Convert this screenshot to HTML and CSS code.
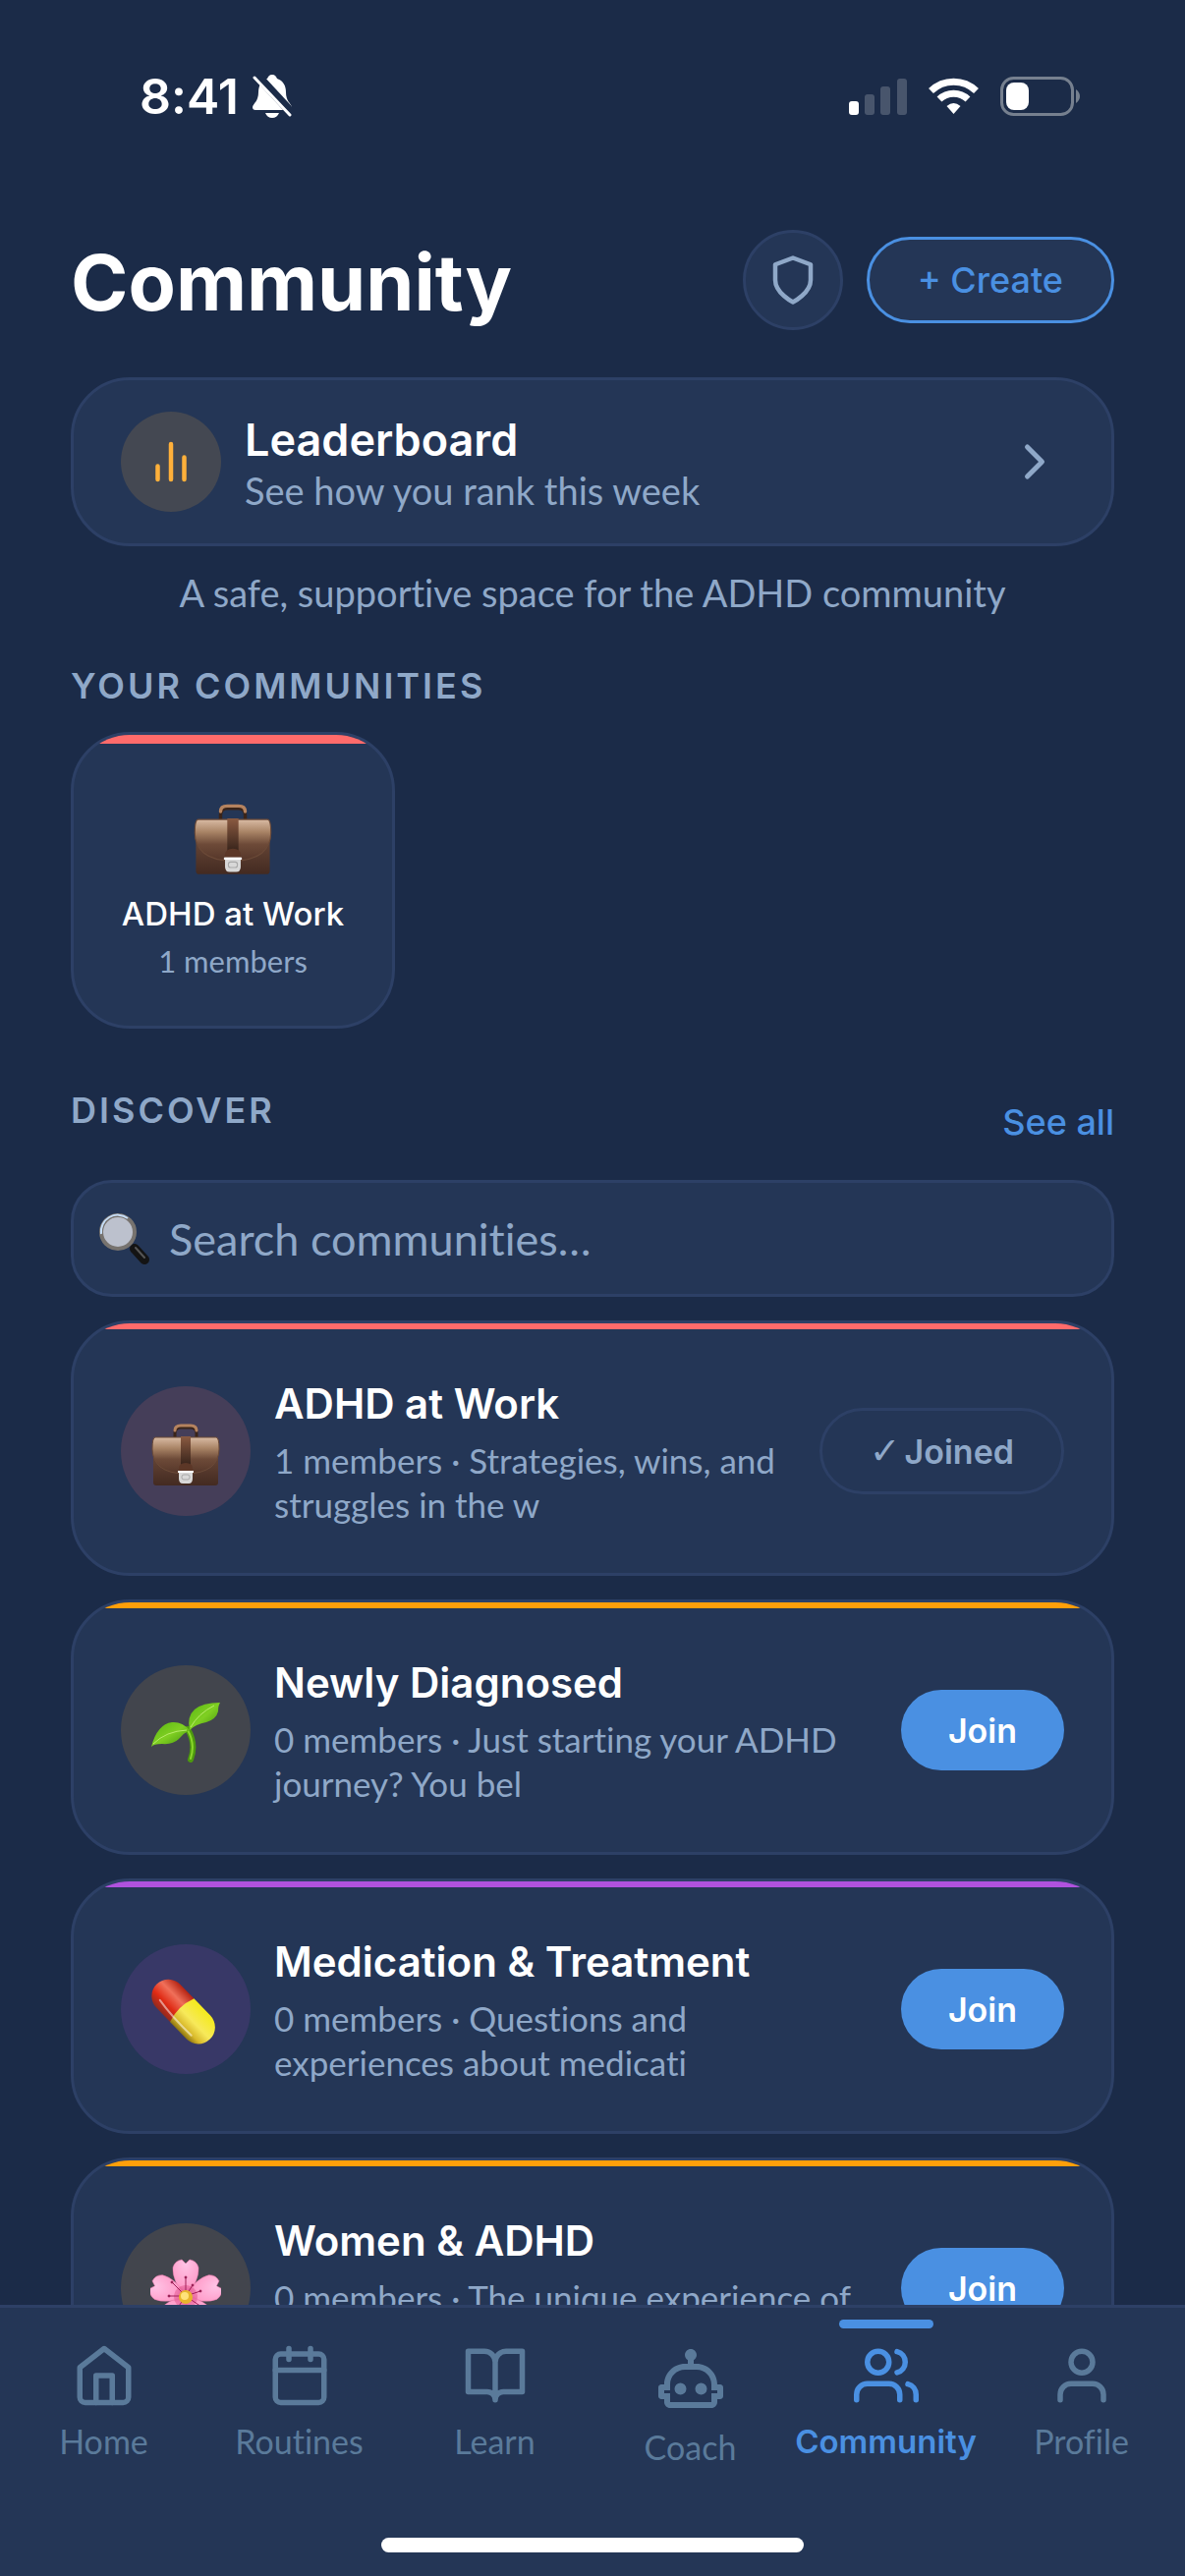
FILE: index.html
```html
<!DOCTYPE html>
<html lang="en">
<head>
  <meta charset="UTF-8">
  <meta name="viewport" content="width=device-width, initial-scale=1.0">
  <title>Community</title>
  <link rel="stylesheet" href="styles.css">
</head>
<body>

<!-- shared drawings -->
<svg class="sprite" aria-hidden="true">
  <defs>
    <linearGradient id="flap" x1="0" y1="0" x2="0" y2="1">
      <stop offset="0" stop-color="#d9bba4"/>
      <stop offset="0.3" stop-color="#a98466"/>
      <stop offset="0.6" stop-color="#6d4a38"/>
      <stop offset="1" stop-color="#553629"/>
    </linearGradient>
    <linearGradient id="bag" x1="0" y1="0" x2="0" y2="1">
      <stop offset="0" stop-color="#7a5542"/>
      <stop offset="1" stop-color="#432a21"/>
    </linearGradient>
    <linearGradient id="strap" x1="0" y1="0" x2="0" y2="1">
      <stop offset="0" stop-color="#8a5a41"/>
      <stop offset="1" stop-color="#38241b"/>
    </linearGradient>
    <linearGradient id="leaf" x1="0" y1="0" x2="1" y2="1">
      <stop offset="0" stop-color="#58b512"/>
      <stop offset="0.5" stop-color="#7fcf22"/>
      <stop offset="1" stop-color="#3f8f0b"/>
    </linearGradient>
    <linearGradient id="pill-red" x1="0" y1="0" x2="0" y2="1">
      <stop offset="0" stop-color="#b52413"/>
      <stop offset="0.35" stop-color="#f0705a"/>
      <stop offset="0.7" stop-color="#e02a14"/>
      <stop offset="1" stop-color="#8e2a1e"/>
    </linearGradient>
    <linearGradient id="pill-yellow" x1="0" y1="0" x2="0" y2="1">
      <stop offset="0" stop-color="#f4ea1c"/>
      <stop offset="0.5" stop-color="#f7e95a"/>
      <stop offset="0.8" stop-color="#d9b92b"/>
      <stop offset="1" stop-color="#8d7410"/>
    </linearGradient>
    <radialGradient id="petal" cx="0.5" cy="0.1" r="1">
      <stop offset="0" stop-color="#ffc4e6"/>
      <stop offset="0.6" stop-color="#ff9fcb"/>
      <stop offset="1" stop-color="#d9437f"/>
    </radialGradient>
  </defs>

  <symbol id="briefcase" viewBox="0 0 72 72">
    <path d="M25 23v-5q0-6 6-6h10q6 0 6 6v5" fill="none" stroke="#3a2419" stroke-width="3"/>
    <path d="M25 15q0-5 6-5h10q6 0 6 5" fill="none" stroke="#b5835f" stroke-width="3" stroke-linecap="round"/>
    <rect x="3" y="24" width="66" height="47" rx="3" fill="url(#bag)"/>
    <path d="M5 22h62q3 0 3 12 0 11-8 18-9 7-26 7t-26-7Q2 45 2 34q0-12 3-12z" fill="url(#flap)" stroke="#6b4a38" stroke-width="1"/>
    <path d="M31 21h10v29H31z" fill="url(#strap)"/>
    <path d="M29 59v-5q0-6 7-6t7 6v5z" fill="#5c3727"/>
    <path d="M29 56h14v8q0 5-4 5h-6q-4 0-4-5z" fill="#d8d8d8"/>
    <path d="M28 56h16v2H28z" fill="#fff"/>
    <rect x="32" y="60" width="8" height="5" rx="2" fill="none" stroke="#a9a9a9"/>
  </symbol>

  <symbol id="sprout" viewBox="0 0 72 72">
    <path d="M38 35q9 15 3 31" fill="none" stroke="#4d9a0e" stroke-width="6" stroke-linecap="round"/>
    <path d="M38 36q8 14 3 29" fill="none" stroke="#8ad62a" stroke-width="2" stroke-linecap="round"/>
    <path d="M40 36Q32 27 22 28 7 30 1 53q2-3 11-3 11 1 17-5 5-6 11-9z" fill="url(#leaf)"/>
    <path d="M40 36q-3-14 5-21 8-7 26-7-2 3-2 9-2 8-12 11-11 2-17 8z" fill="url(#leaf)"/>
    <path d="M3 50q13-13 34-14M41 33q8-14 24-22" fill="none" stroke="#b9ec6a" stroke-width="1"/>
  </symbol>

  <symbol id="pill" viewBox="0 0 72 72">
    <g transform="rotate(46 35 40)">
      <path d="M35 23H15a17 17 0 000 34h20z" fill="url(#pill-red)" transform="translate(-4 0)"/>
      <path d="M31 23h24a17 17 0 010 34H31q-6-17 0-34z" fill="url(#pill-yellow)"/>
      <path d="M8 49q20 3 48 2" fill="none" stroke="#fff" stroke-opacity="0.5" stroke-width="2" stroke-linecap="round"/>
    </g>
  </symbol>

  <symbol id="blossom" viewBox="0 0 72 72">
    <g fill="url(#petal)" stroke="#f07db0" stroke-width="0.5">
      <path id="p" d="M36 46Q22 28 23 15q2-7 9-8l4 4 4-4q7 1 9 8 1 13-13 31z"/>
      <use href="#p" transform="rotate(72 36 44)"/>
      <use href="#p" transform="rotate(144 36 44)"/>
      <use href="#p" transform="rotate(216 36 44)"/>
      <use href="#p" transform="rotate(288 36 44)"/>
    </g>
    <circle cx="36" cy="45" r="12" fill="#d9437f" fill-opacity="0.4"/>
    <g stroke="#a02058" stroke-width="1" fill="#7d1440">
      <path d="M36 44V25M36 44L22 30M36 44L51 39M36 44L19 44M36 44L52 55M36 44L25 60M36 44L43 33"/>
      <circle cx="36" cy="25" r="1"/><circle cx="22" cy="30" r="1"/><circle cx="51" cy="39" r="1"/>
      <circle cx="19" cy="44" r="1"/><circle cx="52" cy="55" r="1"/><circle cx="25" cy="60" r="1"/><circle cx="43" cy="33" r="1"/>
    </g>
    <circle cx="36" cy="45" r="7" fill="#e8b52c"/>
    <circle cx="35" cy="44" r="4" fill="#ffe27a"/>
  </symbol>
</svg>

<div class="app">

  <div class="status-bar">
    <div class="status-time">
      <span>8:41</span>
      <svg width="40" height="44" viewBox="0 0 40 44">
        <path d="M20 0c3 0 4 2 5 4 6 2 9 7 9 14 0 9 5 11 6 15 0 2-1 3-3 3H3c-2 0-3-1-3-3 1-4 6-6 6-15 0-7 3-12 9-14 1-2 2-4 5-4zM13 39h14c-1 3-4 5-7 5s-6-2-7-5z" fill="#fff"/>
        <path d="M3-1L42 41" stroke="#1b2b48" stroke-width="9"/>
        <path d="M2 3L38 41" stroke="#fff" stroke-width="3" stroke-linecap="round"/>
      </svg>
    </div>
    <div class="status-icons">
      <svg width="59" height="38" viewBox="0 0 59 38" fill="#fff">
        <rect y="24" width="10" height="14" rx="3"/>
        <rect x="16" y="17" width="10" height="21" rx="3" opacity="0.2"/>
        <rect x="32" y="9" width="10" height="29" rx="3" opacity="0.2"/>
        <rect x="49" y="1" width="10" height="37" rx="3" opacity="0.2"/>
      </svg>
      <svg width="51" height="38" viewBox="0 0 51 38" fill="none" stroke="#fff" stroke-width="7">
        <path d="M2.500 13.500A33 33 0 0148.500 13.500"/>
        <path d="M11 22A21 21 0 0140 22"/>
        <path d="M25.500 37l-7-8q7-6 14 0z" fill="#fff" stroke="none"/>
      </svg>
      <svg width="81" height="40" viewBox="0 0 81 40">
        <rect x="1.500" y="1.500" width="72" height="37" rx="12" fill="none" stroke="#76808f" stroke-width="3"/>
        <path d="M77 13q4 3 4 7t-4 7z" fill="#76808f"/>
        <rect x="6" y="6" width="23" height="28" rx="8" fill="#fff"/>
      </svg>
    </div>
  </div>

  <main class="content">
    <header class="page-header">
      <h1>Community</h1>
      <button class="shield-btn" aria-label="Guidelines">
        <svg class="icon" width="54" height="54" viewBox="0 0 24 24"><path d="M12 22s8-4 8-10V5l-8-3-8 3v7c0 6 8 10 8 10z"/></svg>
      </button>
      <button class="create-btn">+ Create</button>
    </header>

    <button class="leaderboard">
      <span class="leaderboard-icon">
        <svg class="icon" width="54" height="54" viewBox="0 0 24 24"><path d="M18 20V10M12 20V4M6 20v-6"/></svg>
      </span>
      <span class="leaderboard-text">
        <span class="leaderboard-title">Leaderboard</span>
        <span class="leaderboard-sub">See how you rank this week</span>
      </span>
      <svg class="icon" width="60" height="60" viewBox="0 0 24 24"><path d="M9 18l6-6-6-6"/></svg>
    </button>

    <p class="tagline">A safe, supportive space for the ADHD community</p>

    <h2 class="section-label">Your communities</h2>
    <div class="my-communities">
      <a href="#" class="my-card coral">
        <svg width="82" height="82"><use href="#briefcase"/></svg>
        <span class="my-name">ADHD at Work</span>
        <span class="my-members">1 members</span>
      </a>
    </div>

    <div class="section-row">
      <h2 class="section-label">Discover</h2>
      <a href="#" class="see-all">See all</a>
    </div>

    <label class="search">
      <svg width="54" height="54" viewBox="0 0 54 54">
        <path d="M34 35l15 15" stroke="#8f8f8f" stroke-width="4"/>
        <path d="M37 37l10 11" stroke="#141414" stroke-width="10" stroke-linecap="round"/>
        <path d="M38 36l9 10" stroke="#555" stroke-width="2" stroke-linecap="round"/>
        <circle cx="20" cy="20" r="17" fill="#bcc1cd" stroke="#77736f" stroke-width="4"/>
        <path d="M3 22A17 17 0 0130 6" fill="none" stroke="#c5dcf5" stroke-width="2"/>
      </svg>
      <input type="text" placeholder="Search communities…" aria-label="Search communities">
    </label>

    <article class="card coral">
      <div class="card-body">
        <div class="card-icon"><svg width="72" height="72"><use href="#briefcase"/></svg></div>
        <div class="card-text">
          <h3>ADHD at Work</h3>
          <p>1 members · Strategies, wins, and struggles in the w</p>
        </div>
        <button class="joined-btn"><span class="check">✓</span>Joined</button>
      </div>
    </article>

    <article class="card orange">
      <div class="card-body">
        <div class="card-icon"><svg width="72" height="72"><use href="#sprout"/></svg></div>
        <div class="card-text">
          <h3>Newly Diagnosed</h3>
          <p>0 members · Just starting your ADHD journey? You bel</p>
        </div>
        <button class="join-btn">Join</button>
      </div>
    </article>

    <article class="card purple">
      <div class="card-body">
        <div class="card-icon"><svg width="72" height="72"><use href="#pill"/></svg></div>
        <div class="card-text">
          <h3>Medication &amp; Treatment</h3>
          <p>0 members · Questions and experiences about medicati</p>
        </div>
        <button class="join-btn">Join</button>
      </div>
    </article>

    <article class="card orange">
      <div class="card-body">
        <div class="card-icon"><svg width="72" height="72"><use href="#blossom"/></svg></div>
        <div class="card-text">
          <h3>Women &amp; ADHD</h3>
          <p>0 members · The unique experience of women with ADHD</p>
        </div>
        <button class="join-btn">Join</button>
      </div>
    </article>
  </main>

  <nav class="tab-bar">
    <div class="tabs">
      <a href="#" class="tab">
        <svg class="icon" width="66" height="66" viewBox="0 0 24 24"><path d="M3 9l9-7 9 7v11a2 2 0 01-2 2H5a2 2 0 01-2-2z"/><path d="M9 22V12h6v10"/></svg>
        <span>Home</span>
      </a>
      <a href="#" class="tab">
        <svg class="icon" width="66" height="66" viewBox="0 0 24 24"><rect x="3" y="4" width="18" height="18" rx="2"/><path d="M16 2v4M8 2v4M3 10h18"/></svg>
        <span>Routines</span>
      </a>
      <a href="#" class="tab">
        <svg class="icon" width="66" height="66" viewBox="0 0 24 24"><path d="M2 3h6a4 4 0 014 4v14a3 3 0 00-3-3H2zM22 3h-6a4 4 0 00-4 4v14a3 3 0 013-3h7z"/></svg>
        <span>Learn</span>
      </a>
      <a href="#" class="tab">
        <svg width="72" height="72" viewBox="0 0 24 24" fill="currentColor"><path d="M17.5 15.500a2 2 0 11-4 0 2 2 0 014 0M10.500 15.500a2 2 0 11-4 0 2 2 0 014 0M23 15v3c0 .55-.45 1-1 1h-1v1c0 1.110-.89 2-2 2H5c-1.100 0-2-.89-2-2v-1H2c-.55 0-1-.45-1-1v-3c0-.55.45-1 1-1h1c0-3.870 3.130-7 7-7h1V5.730C10.400 5.390 10 4.740 10 4c0-1.100.9-2 2-2s2 .9 2 2c0 .74-.4 1.390-1 1.730V7h1c3.870 0 7 3.130 7 7h1c.55 0 1 .45 1 1m-2 1h-2v-2c0-2.760-2.240-5-5-5h-4c-2.760 0-5 2.240-5 5v2H3v1h2v3h14v-3h2z"/></svg>
        <span>Coach</span>
      </a>
      <a href="#" class="tab active">
        <svg class="icon" width="66" height="66" viewBox="0 0 24 24"><path d="M17 21v-2a4 4 0 00-4-4H5a4 4 0 00-4 4v2M23 21v-2a4 4 0 00-3-3.870M16 3.130a4 4 0 010 7.750"/><circle cx="9" cy="7" r="4"/></svg>
        <span>Community</span>
      </a>
      <a href="#" class="tab">
        <svg class="icon" width="66" height="66" viewBox="0 0 24 24"><path d="M20 21v-2a4 4 0 00-4-4H8a4 4 0 00-4 4v2"/><circle cx="12" cy="7" r="4"/></svg>
        <span>Profile</span>
      </a>
    </div>
    <div class="home-indicator"></div>
  </nav>

</div>

</body>
</html>
```
FILE: styles.css
```css
* { box-sizing: border-box; }
body {
  margin: 0;
  background: #1b2b48;
  color: #fff;
  font-family: Lato, sans-serif;
  font-variant-ligatures: none;
}
h1, h2, h3, p { margin: 0; }
a { text-decoration: none; color: inherit; }
button { font-family: Inter, sans-serif; cursor: pointer; margin: 0; }
svg { display: block; flex-shrink: 0; }

.sprite { position: absolute; width: 0; height: 0; }
.icon {
  fill: none;
  stroke: currentColor;
  stroke-width: 2;
  stroke-linecap: round;
  stroke-linejoin: round;
}

.app {
  display: flex;
  flex-direction: column;
  height: 100vh;
}

/* status bar */
.status-bar {
  display: flex;
  justify-content: space-between;
  align-items: center;
  padding: 73px 107px 63px 142px;
}
.status-time {
  display: flex;
  align-items: center;
  gap: 14px;
  font-family: Inter, sans-serif;
  font-size: 50px;
  font-weight: 600;
  line-height: 50px;
}
.status-icons { display: flex; align-items: center; gap: 22px; }

.content {
  flex: 1;
  min-height: 0;
  overflow-y: auto;
  scrollbar-width: none;
  padding: 48px 72px 24px;
}

/* header */
.page-header {
  display: flex;
  align-items: center;
  gap: 24px;
  margin-bottom: 48px;
}
h1 {
  flex: 1;
  padding-top: 4px;
  font-family: Inter, sans-serif;
  font-size: 79px;
  font-weight: 700;
  line-height: 98px;
}
.shield-btn {
  display: flex;
  align-items: center;
  justify-content: center;
  width: 102px;
  height: 102px;
  padding: 0;
  border: 3px solid #2d4066;
  border-radius: 50%;
  background: #243656;
  color: #8fa8c8;
}
.create-btn {
  padding: 0 49px;
  height: 88px;
  border: 3px solid #4a90e2;
  border-radius: 44px;
  background: #243656;
  color: #4a90e2;
  font-size: 36px;
  font-weight: 500;
}

/* leaderboard */
.leaderboard {
  display: flex;
  align-items: center;
  gap: 24px;
  width: 100%;
  padding: 30px 48px;
  border: 3px solid #2d4066;
  border-radius: 60px;
  background: #243656;
  color: #8fa8c8;
  text-align: left;
}
.leaderboard-icon {
  display: flex;
  align-items: center;
  justify-content: center;
  width: 102px;
  height: 102px;
  border-radius: 50%;
  background: #444852;
  color: #ffb03a;
}
.leaderboard-text {
  flex: 1;
  display: flex;
  flex-direction: column;
  padding-top: 4px;
}
.leaderboard-title {
  color: #fff;
  font-size: 45px;
  font-weight: 600;
  line-height: 54px;
}
.leaderboard-sub {
  font-family: Lato, sans-serif;
  font-size: 38px;
  line-height: 48px;
}

.tagline {
  margin: 22px 0 46px;
  color: #8fa8c8;
  font-size: 38px;
  line-height: 51px;
  text-align: center;
}

.section-label {
  margin-bottom: 24px;
  color: #8fa8c8;
  font-family: Inter, sans-serif;
  font-size: 36px;
  font-weight: 600;
  line-height: 46px;
  letter-spacing: 3px;
  text-transform: uppercase;
}

/* your communities */
.my-communities {
  display: flex;
  gap: 24px;
  margin-bottom: 60px;
}
.my-card {
  display: flex;
  flex-direction: column;
  align-items: center;
  width: 330px;
  padding-bottom: 45px;
  border: 3px solid #2d4066;
  border-radius: 60px;
  background: #243656;
  overflow: hidden;
}
.my-card::before {
  content: "";
  width: 100%;
  height: 9px;
  margin-bottom: 52px;
  background: var(--accent);
}
.my-name {
  margin: 18px 0 6px;
  font-family: Inter, sans-serif;
  font-size: 33px;
  font-weight: 500;
  line-height: 42px;
}
.my-members {
  color: #8fa8c8;
  font-size: 31px;
  line-height: 42px;
}

.section-row {
  display: flex;
  justify-content: space-between;
  align-items: center;
  margin-bottom: 24px;
}
.see-all {
  color: #4a90e2;
  font-family: Inter, sans-serif;
  font-size: 36px;
  font-weight: 500;
  line-height: 46px;
}

/* search */
.search {
  display: flex;
  align-items: center;
  gap: 18px;
  height: 119px;
  padding: 0 25px;
  border: 3px solid #2d4066;
  border-radius: 42px;
  background: #243656;
}
.search input {
  flex: 1;
  min-width: 0;
  padding: 0;
  border: none;
  outline: none;
  background: none;
  color: #fff;
  font-family: Lato, sans-serif;
  font-size: 45px;
  line-height: 60px;
  font-variant-ligatures: none;
}
.search input::placeholder { color: #8fa8c8; opacity: 1; }

/* discover cards */
.card {
  margin-top: 24px;
  border: 3px solid #2d4066;
  border-radius: 60px;
  background: #243656;
  overflow: hidden;
}
.card::before {
  content: "";
  display: block;
  height: 6px;
  background: var(--accent);
}
.coral { --accent: #ff6b6b; --tint: #453e59; }
.orange { --accent: #ff9f0a; --tint: #42454d; }
.purple { --accent: #af52de; --tint: #383867; }

.card-body {
  display: flex;
  align-items: center;
  gap: 24px;
  padding: 47px 48px;
}
.card-icon {
  display: flex;
  align-items: center;
  justify-content: center;
  width: 132px;
  height: 132px;
  flex-shrink: 0;
  border-radius: 50%;
  background: var(--tint);
}
.card-text {
  flex: 1;
  min-width: 0;
  padding-right: 12px;
}
.card h3 {
  margin-bottom: 6px;
  font-family: Inter, sans-serif;
  font-size: 42px;
  font-weight: 600;
  line-height: 58px;
}
.card p {
  color: #8fa8c8;
  font-size: 35px;
  line-height: 45px;
}
.join-btn, .joined-btn {
  flex-shrink: 0;
  border-radius: 44px;
  font-size: 34px;
  font-weight: 600;
}
.join-btn {
  height: 82px;
  padding: 0 48px;
  border: none;
  background: #4a90e2;
  color: #fff;
}
.joined-btn {
  height: 88px;
  padding: 0 48px;
  border: 3px solid #2d4066;
  background: none;
  color: #8fa8c8;
}
.check {
  margin-right: 4px;
  font-family: "DejaVu Sans", sans-serif;
  font-size: 38px;
  line-height: 38px;
}

/* tab bar */
.tab-bar {
  padding: 0 6px 24px;
  border-top: 3px solid #2d4066;
  background: #243656;
}
.tabs {
  display: flex;
  align-items: flex-start;
}
.tab {
  position: relative;
  flex: 1;
  display: flex;
  flex-direction: column;
  align-items: center;
  gap: 13px;
  padding-top: 36px;
  color: #5a7a9a;
  font-size: 34px;
  line-height: 42px;
}
.tab.active {
  color: #4a90e2;
  font-family: Inter, sans-serif;
  font-size: 33px;
  font-weight: 600;
}
.tab.active::before {
  content: "";
  position: absolute;
  top: 12px;
  width: 96px;
  height: 9px;
  border-radius: 5px;
  background: #4a90e2;
}
.home-indicator {
  width: 432px;
  max-width: 36%;
  height: 15px;
  margin: 71px auto 0;
  border-radius: 8px;
  background: #fff;
}
```
